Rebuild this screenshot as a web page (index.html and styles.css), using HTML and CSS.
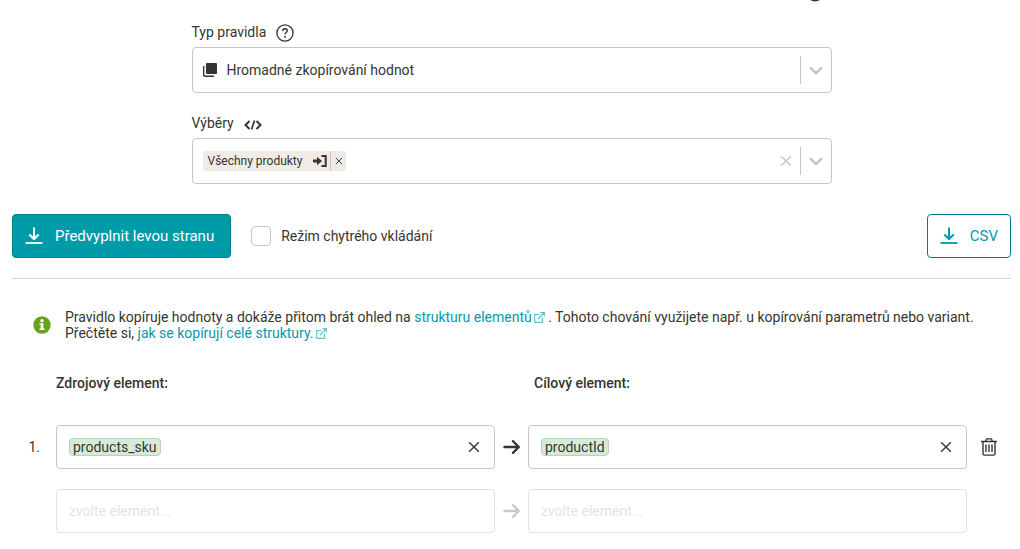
FILE: index.html
```html
<!DOCTYPE html>
<html lang="cs">
<head>
<meta charset="utf-8">
<meta name="viewport" content="width=device-width, initial-scale=1">
<title>Hromadné zkopírování hodnot</title>
<link rel="stylesheet" href="styles.css">
</head>
<body>
<svg class="sprite" aria-hidden="true">
  <symbol id="chevron" viewBox="0 0 14 9"><path d="M1 1.200l6 6 6-6" fill="none" stroke="currentColor" stroke-width="2.400"/></symbol>
  <symbol id="cross" viewBox="0 0 12 12"><path d="M1.200 1.200l9.600 9.600M10.800 1.200L1.200 10.800" fill="none" stroke="currentColor" stroke-width="1.400"/></symbol>
  <symbol id="download" viewBox="0 0 18 18"><path d="M9 .5v11.500M4.300 7.500L9 12l4.700-4.500" fill="none" stroke="currentColor" stroke-width="2"/><path d="M.5 16h17" stroke="currentColor" stroke-width="1.800"/></symbol>
  <symbol id="arrow" viewBox="0 0 18 16"><path d="M1.500 8h14M10 2.200L15.800 8l-5.800 5.800" fill="none" stroke="currentColor" stroke-width="2.400" stroke-linecap="round" stroke-linejoin="round"/></symbol>
  <symbol id="external" viewBox="0 0 11 11"><path d="M5.500 2.500H.7v7.800h7.800V5.500M4 7l6-6M6.500.7h3.800v3.800" fill="none" stroke="currentColor" stroke-width="1.200"/></symbol>
</svg>
<main class="page">
  <div class="form">
    <div class="form-top">
      <svg class="top-dot" viewBox="0 0 18 18" aria-hidden="true"><circle cx="9" cy="9" r="8.500" fill="currentColor"/></svg>
    </div>
    <div class="form-group">
      <div class="label-row">
        <label for="rule-type">Typ pravidla</label>
        <button class="icon-button" type="button" aria-label="Nápověda">
          <svg class="icon-help" viewBox="0 0 18 18"><circle cx="9" cy="9" r="8.100" fill="none" stroke="currentColor" stroke-width="1.300"/><path d="M6.700 7.100c0-1.400 1-2.300 2.300-2.300s2.300.8 2.300 2c0 1.600-2.200 1.700-2.200 3.500" fill="none" stroke="currentColor" stroke-width="1.400"/><circle cx="9.050" cy="12.700" r=".95" fill="currentColor"/></svg>
        </button>
      </div>
      <div class="select-box">
        <svg class="icon-copy" viewBox="0 0 14 14" aria-hidden="true"><rect x="3" width="11" height="11" rx="1" fill="currentColor"/><path d="M.7 3v9.300a1 1 0 0 0 1 1H11" fill="none" stroke="currentColor" stroke-width="1.400"/></svg>
        <select id="rule-type" class="select"><option>Hromadné zkopírování hodnot</option></select>
        <span class="divider"></span>
        <svg class="icon-chevron" aria-hidden="true"><use href="#chevron"/></svg>
      </div>
    </div>
    <div class="form-group">
      <div class="label-row">
        <label for="selections">Výběry</label>
        <button class="icon-button" type="button" aria-label="Zobrazit kód">
          <svg class="icon-code" viewBox="0 0 18 10"><path d="M5.500 1L1.500 5l4 4M12.500 1l4 4-4 4" fill="none" stroke="currentColor" stroke-width="2"/><path d="M10.500.5l-3 9" stroke="currentColor" stroke-width="1.700"/></svg>
        </button>
      </div>
      <div class="select-box">
        <span class="tag">
          <span class="tag-text">Všechny produkty</span>
          <svg class="icon-enter" viewBox="0 0 14 12" aria-hidden="true"><path d="M0 6h5" stroke="currentColor" stroke-width="3"/><path d="M4 1.800L9 6l-5 4.200z" fill="currentColor"/><path d="M8.500 1h4.200v10H8.500" fill="none" stroke="currentColor" stroke-width="2"/></svg>
          <button class="tag-remove" type="button" aria-label="Odebrat Všechny produkty"><svg class="icon-cross-small"><use href="#cross"/></svg></button>
        </span>
        <input id="selections" class="bare-input" type="text">
        <button class="icon-button muted" type="button" aria-label="Vymazat výběry"><svg class="icon-cross"><use href="#cross"/></svg></button>
        <span class="divider"></span>
        <button class="icon-button muted" type="button" aria-label="Otevřít nabídku"><svg class="icon-chevron"><use href="#chevron"/></svg></button>
      </div>
    </div>
  </div>

  <div class="toolbar">
    <button class="button button-primary" type="button"><svg class="icon-download" aria-hidden="true"><use href="#download"/></svg>Předvyplnit levou stranu</button>
    <label class="check"><input class="checkbox" type="checkbox">Režim chytrého vkládání</label>
    <button class="button button-outline" type="button"><svg class="icon-download" aria-hidden="true"><use href="#download"/></svg>CSV</button>
  </div>

  <section class="note">
    <svg class="icon-info" viewBox="0 0 18 18" aria-hidden="true"><circle cx="9" cy="9" r="8.700" fill="#69a31c"/><circle cx="9" cy="4.700" r="1.700" fill="#fff"/><path d="M6.500 7.300h3.900v5.300h1.200V14H6.500v-1.400h1.200V8.700H6.500z" fill="#fff"/></svg>
    <p class="note-text">Pravidlo kopíruje hodnoty a dokáže přitom brát ohled na <a href="#struktura">strukturu elementů<svg class="icon-external" aria-hidden="true"><use href="#external"/></svg></a> . Tohoto chování využijete např. u kopírování parametrů nebo variant.<br>Přečtěte si, <a href="#kopirovani">jak se kopírují celé struktury.<svg class="icon-external" aria-hidden="true"><use href="#external"/></svg></a></p>
  </section>

  <section class="mapping">
    <div class="map-row map-head">
      <h2 class="map-title source">Zdrojový element:</h2>
      <h2 class="map-title target">Cílový element:</h2>
    </div>
    <div class="map-row">
      <span class="number">1.</span>
      <div class="field">
        <span class="chip">products_sku</span>
        <input class="bare-input" type="text" aria-label="Zdrojový element 1">
        <button class="icon-button" type="button" aria-label="Vymazat zdrojový element"><svg class="icon-cross"><use href="#cross"/></svg></button>
      </div>
      <svg class="icon-arrow" aria-hidden="true"><use href="#arrow"/></svg>
      <div class="field">
        <span class="chip">productId</span>
        <input class="bare-input" type="text" aria-label="Cílový element 1">
        <button class="icon-button" type="button" aria-label="Vymazat cílový element"><svg class="icon-cross"><use href="#cross"/></svg></button>
      </div>
      <button class="icon-button" type="button" aria-label="Smazat řádek">
        <svg class="icon-trash" viewBox="0 0 16 18"><path d="M0 3.500h16M4.700 3.500l.5-1.800a1 1 0 0 1 1-.8h3.600a1 1 0 0 1 1 .8l.5 1.800M2 3.500v12a1.600 1.600 0 0 0 1.600 1.600h8.800a1.600 1.600 0 0 0 1.600-1.600v-12M5 6.500v7.500M8 6.500v7.500M11 6.500v7.500" fill="none" stroke="currentColor" stroke-width="1.400"/></svg>
      </button>
    </div>
    <div class="map-row">
      <span></span>
      <input class="field field-empty" type="text" placeholder="zvolte element..." aria-label="Nový zdrojový element">
      <svg class="icon-arrow faded" aria-hidden="true"><use href="#arrow"/></svg>
      <input class="field field-empty" type="text" placeholder="zvolte element..." aria-label="Nový cílový element">
    </div>
  </section>
</main>
</body>
</html>
```
FILE: styles.css
```css
* { box-sizing: border-box; }

body {
  margin: 0;
  background: #fff;
  color: #363530;
  font: 14px/16px Roboto, "Liberation Sans", sans-serif;
}

svg { display: block; flex: none; }
button, input, select { color: inherit; font: inherit; }
a { color: #009ba9; text-decoration: none; }

.sprite { position: absolute; width: 0; height: 0; }
.page { padding: 0 9px 16px 12px; }
.form { max-width: 640px; margin: 0 auto; }

.form-top {
  display: flex;
  justify-content: flex-end;
  align-items: flex-end;
  height: 2px;
  padding-right: 8px;
  overflow: hidden;
}
.top-dot { width: 18px; height: 18px; }

.form-group { padding-top: 20px; }
.label-row { display: flex; align-items: center; gap: 10px; height: 20px; margin-bottom: 5px; }

.icon-button {
  display: flex;
  justify-content: center;
  align-items: center;
  padding: 0;
  border: 0;
  background: none;
}
.muted { color: #c8c4c0; }

.icon-help { width: 18px; height: 18px; margin-top: 2px; }
.icon-code { width: 18px; height: 10px; margin-top: 3px; }
.icon-copy { width: 14px; height: 14px; }
.icon-enter { width: 14px; height: 12px; }
.icon-chevron { width: 14px; height: 9px; color: #c8c4c0; }
.icon-cross { width: 12px; height: 12px; }
.icon-cross-small { width: 8px; height: 8px; }
.icon-download { width: 18px; height: 18px; }
.icon-info { width: 18px; height: 18px; }
.icon-arrow { width: 18px; height: 16px; justify-self: center; }
.icon-trash { width: 16px; height: 18px; }
.icon-external { display: inline-block; width: 11px; height: 11px; margin-left: 2px; opacity: 0.6; vertical-align: -1px; }
.faded { color: #cbcbc9; }

.select-box {
  display: flex;
  align-items: center;
  height: 46px;
  padding: 0 8px 0 10px;
  border: 1px solid #c8c6c4;
  border-radius: 4px;
}
.select {
  flex: 1;
  min-width: 0;
  height: 100%;
  padding: 0 10px;
  border: 0;
  background: none;
  appearance: none;
}
.divider { width: 1px; height: 28px; margin: 0 8px; background: #c8c6c4; }

.tag {
  display: flex;
  align-items: center;
  height: 20px;
  padding-left: 5px;
  border-radius: 2px;
  background: #f0ece5;
  font-size: 12px;
}
.tag-text { margin-right: 11px; }
.tag-remove {
  display: flex;
  justify-content: center;
  align-items: center;
  width: 16px;
  height: 20px;
  margin-left: 3px;
  padding: 0;
  border: 0;
  border-left: 1px solid #c8c6c4;
  background: none;
}
.bare-input { flex: 1; min-width: 0; padding: 0 4px; border: 0; background: none; outline: 0; }

.toolbar {
  display: flex;
  align-items: center;
  gap: 20px;
  margin-top: 30px;
  padding-bottom: 20px;
  border-bottom: 1px solid #d4d4d4;
}
.button {
  display: flex;
  align-items: center;
  gap: 12px;
  height: 44px;
  padding: 0 12px;
  border: 1px solid #007d8a;
  border-radius: 4px;
  font-size: 15px;
}
.button-primary { padding-right: 16px; background: #009ba9; color: #fff; }
.button-outline { margin-left: auto; background: #fff; color: #009ba9; }
.check { display: flex; align-items: center; gap: 10px; }
.checkbox {
  width: 20px;
  height: 20px;
  margin: 0;
  border: 1px solid #c8c6c4;
  border-radius: 4px;
  background: #fff;
  appearance: none;
}
.checkbox:checked { background: #009ba9; }

.note { display: flex; align-items: center; gap: 14px; padding: 30px 21px 0; }
.note-text { margin: 0; }

.mapping { margin-top: 34px; }
.map-row {
  display: grid;
  grid-template-columns: 44px 1fr 33px 1fr 44px;
  align-items: center;
  margin-bottom: 20px;
}
.map-row:last-child { margin-bottom: 0; }
.map-head { margin-bottom: 34px; }
.map-title { margin: 0; font-size: 14px; font-weight: 500; }
.source { grid-column: 2; }
.target { grid-column: 4; padding-left: 6px; }
.number { justify-self: end; padding-right: 16px; }

.field {
  display: flex;
  align-items: center;
  width: 100%;
  min-width: 0;
  height: 44px;
  padding: 0 14px 0 12px;
  border: 1px solid #c8c6c4;
  border-radius: 4px;
  background: #fff;
}
.field-empty { border-color: #e2e2e0; }
.field-empty::placeholder { color: #e4e4e4; opacity: 1; }
.chip {
  padding: 0 3px;
  border: 1px solid #abd9b5;
  border-radius: 4px;
  background: #d5ebd8;
}
```
